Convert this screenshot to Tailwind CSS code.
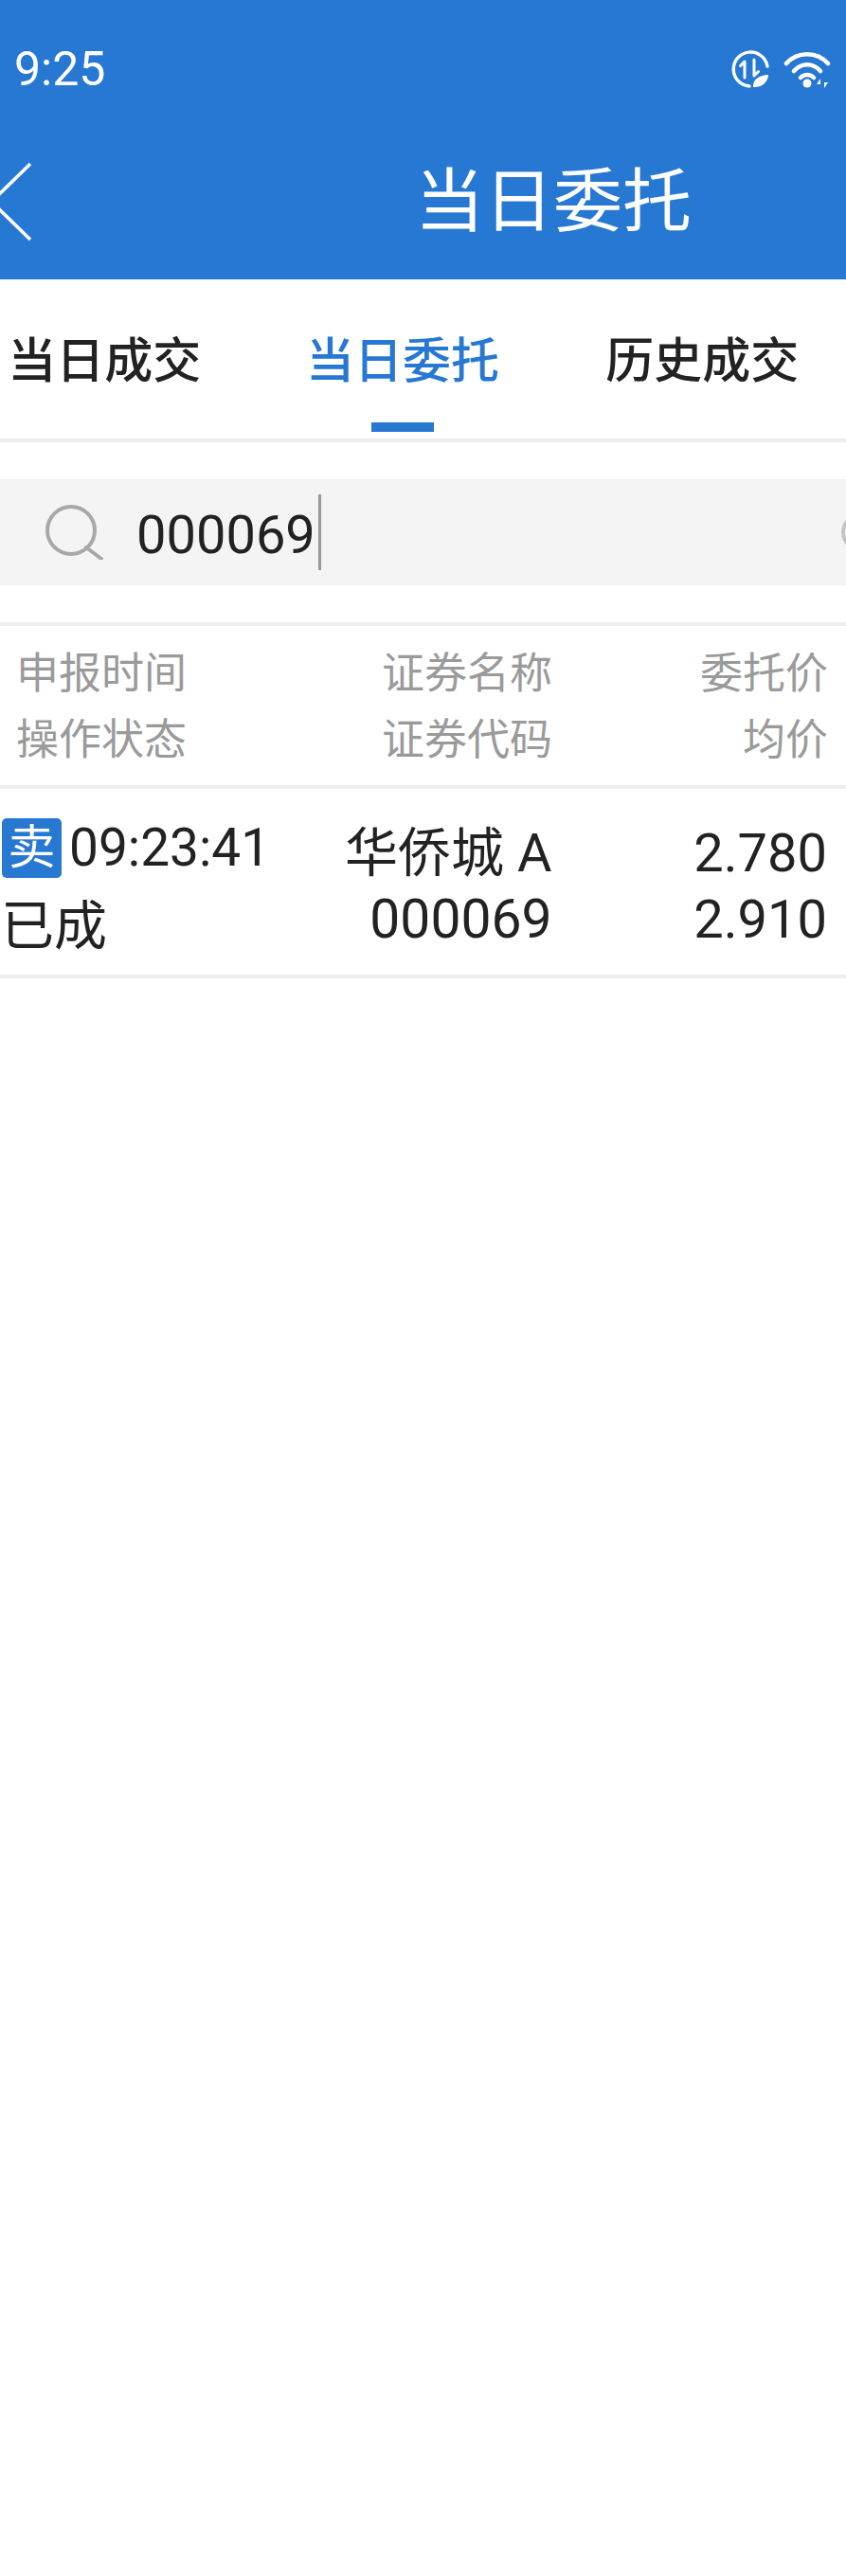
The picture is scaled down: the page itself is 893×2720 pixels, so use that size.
<!DOCTYPE html>
<html>
  <head>
    <meta charset="UTF-8" />
    <meta name="viewport" content="width=device-width, initial-scale=1.0" />
    <title>当日委托</title>
    <script src="https://cdn.jsdelivr.net/npm/@tailwindcss/browser@4"></script>
  </head>
  <body class="bg-white h-[2720px] overflow-hidden text-[#222] font-['Roboto','Noto_Sans_CJK_SC',sans-serif]">
    <header class="bg-[#2778d3] h-[295px] text-white overflow-hidden">
      <div class="flex items-center justify-between h-[52px] mt-[47px] pl-[15px] pr-[16px]">
        <span class="text-[50px] leading-[52px]">9:25</span>
        <div class="flex items-center gap-[15px]">
          <svg class="w-[40px] h-[40px]" viewBox="0 0 40 40" fill="none" stroke="white" stroke-width="3.4" stroke-linecap="round" stroke-linejoin="round">
            <path d="M38 17A18 18 0 1 0 19 38" />
            <path d="M14 29V12L9.500 16.500" stroke-width="3" />
            <path d="M24 10V27L28.500 22.500" stroke-width="3" />
            <path d="M23 39C22 31 30 26 39 26C39 33 32 40 23 39Z" fill="white" stroke="none" />
          </svg>
          <svg class="w-[50px] h-[40px]" viewBox="0 0 50 40" fill="none" stroke="white" stroke-width="4.500" stroke-linecap="round">
            <path d="M3 14C15 1 35 1 47 14" />
            <path d="M11 22C19 13 31 13 39 22" />
            <path d="M18 29C22 25 28 25 32 29" />
            <circle cx="25" cy="35" r="4.500" fill="white" stroke="none" />
            <path d="M39 30L35 36H39V40ZM43 40L47 34H43V30Z" fill="white" stroke="none" />
          </svg>
        </div>
      </div>
      <div class="flex items-center h-[90px] mt-[69px]">
        <svg class="w-[34px] h-[84px] shrink-0" viewBox="0 0 34 84" fill="none" stroke="white" stroke-width="3.500">
          <path d="M32 2L-9 42L32 82" />
        </svg>
        <h1 class="ml-[404px] text-[73px] leading-[90px] font-normal">当日委托</h1>
      </div>
    </header>

    <nav class="grid grid-cols-3 w-[944px] -ml-[47px] h-[172px] border-b-4 border-[#eeeeee] text-[51px] font-medium text-center">
      <div class="pt-[57px] leading-[60px]">当日成交</div>
      <div class="relative pt-[57px] leading-[60px] text-[#2778d3]">
        当日委托
        <span class="absolute left-1/2 -translate-x-1/2 bottom-[7px] w-[66px] h-[10px] bg-[#2778d3]"></span>
      </div>
      <div class="pt-[57px] leading-[60px] pl-[3px]">历史成交</div>
    </nav>

    <div class="mt-[39px] h-[112px] bg-[#f4f4f4] flex items-center relative overflow-hidden">
      <svg class="ml-[47px] w-[62px] h-[58px] shrink-0" viewBox="0 0 62 58" fill="none" stroke="#a8a8a8" stroke-width="4">
        <circle cx="28" cy="27" r="25" />
        <path d="M44 45L60 57" stroke-linecap="round" />
      </svg>
      <span class="ml-[35px] text-[56px] leading-none pt-[6px]">000069</span>
      <span class="ml-[3px] w-[3px] h-[80px] bg-[#999]"></span>
      <span class="absolute left-[888px] top-[36px] w-[40px] h-[40px] rounded-full border-4 border-[#c4c4c4]"></span>
    </div>

    <div class="mt-[39px] border-t-4 border-b-4 border-[#eeeeee] flex pt-[16px] pb-[12px] pr-[19px] text-[45px] leading-[70px] text-[#9a9a9a]">
      <div class="flex-1 pl-[17px]">
        <div>申报时间</div>
        <div>操作状态</div>
      </div>
      <div class="w-[300px] text-right">
        <div>证券名称</div>
        <div>证券代码</div>
      </div>
      <div class="w-[291px] text-right">
        <div>委托价</div>
        <div>均价</div>
      </div>
    </div>

    <div class="flex h-[200px] border-b-4 border-[#eeeeee] pr-[20px] text-[56px]">
      <div class="flex-1">
        <div class="flex items-center pl-[2px] pt-[31px]">
          <span class="w-[63px] h-[63px] rounded-[5px] bg-[#2778d3] text-white text-[50px] leading-[63px] text-center">卖</span>
          <span class="ml-[8px] text-[55px] leading-[63px]">09:23:41</span>
        </div>
        <div class="pl-[1px] mt-[21px] leading-[60px]">已成</div>
      </div>
      <div class="w-[300px] text-right pt-[33px] leading-[70px]">
        <div>华侨城 A</div>
        <div class="text-[57px]">000069</div>
      </div>
      <div class="w-[293px] text-right pt-[33px] leading-[70px]">
        <div>2.780</div>
        <div>2.910</div>
      </div>
    </div>
  </body>
</html>
